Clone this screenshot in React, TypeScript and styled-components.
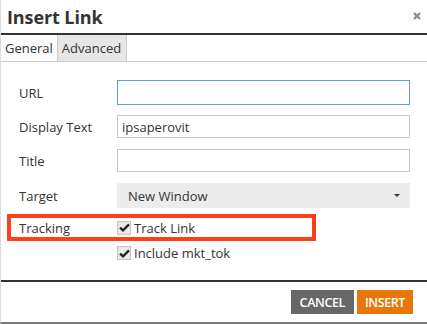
import React from 'react';
import styled, { createGlobalStyle } from 'styled-components';

const GlobalStyle = createGlobalStyle`
  html, body {
    margin: 0;
    padding: 0;
    background: #ffffff;
  }
  body {
    font-family: "Open Sans", "Liberation Sans", sans-serif;
    color: #333333;
  }
`;

// Dialog frame
const Dialog = styled.div`
  width: 427px;
  height: 324px;
  box-sizing: border-box;
  border-left: 1px solid #dcdcdc;
  border-bottom: 2px solid #7a7a7a;
  background: #ffffff;
  display: flex;
  flex-direction: column;
  overflow: hidden;
`;

const Header = styled.div`
  height: 33px;
  display: flex;
  align-items: center;
  justify-content: space-between;
  padding: 0 6px 0 6px;
  border-bottom: 2px solid #333333;
`;

const Title = styled.h1`
  margin: 0;
  font-size: 18px;
  font-weight: 700;
  color: #333333;
  letter-spacing: -0.1px;
`;

const CloseButton = styled.span`
  display: flex;
  width: 8px;
  height: 8px;
  margin-bottom: 1px;
`;

// Tabs
const TabBar = styled.div`
  display: flex;
  height: 26px;
  border-bottom: 1px solid #cccccc;
`;

const Tab = styled.div<{ $active?: boolean }>`
  display: flex;
  align-items: center;
  padding: 0 ${p => (p.$active ? '4px' : '5px')} 0 ${p => (p.$active ? '4px' : '4px')};
  font-size: 13px;
  color: #333333;
  background: ${p => (p.$active ? '#fbfbfb' : '#e6e6e6')};
  border-right: 1px solid #cccccc;
  border-left: ${p => (p.$active ? 'none' : '1px solid #cccccc')};
  margin-left: ${p => (p.$active ? '0' : '-1px')};
`;

// Form body
const Body = styled.div`
  flex: 1;
  display: flex;
  flex-direction: column;
  padding: 18px 0 0 0;
`;

const Row = styled.div<{ $gap?: number; $height: number }>`
  display: flex;
  align-items: center;
  height: ${p => p.$height}px;
  margin-top: ${p => p.$gap ?? 0}px;
  padding-left: 18px;
`;

const Label = styled.label`
  width: 98px;
  font-size: 13px;
  color: #333333;
  flex-shrink: 0;
`;

const Input = styled.input<{ $focused?: boolean }>`
  width: 293px;
  height: 100%;
  box-sizing: border-box;
  border: 1px solid ${p => (p.$focused ? '#5b9ddc' : '#c8c8c8')};
  padding: 0 4px;
  font-family: "Open Sans", "Liberation Sans", sans-serif;
  font-size: 13px;
  color: #333333;
  outline: none;
  background: #ffffff;
`;

const Select = styled.div`
  width: 293px;
  height: 100%;
  box-sizing: border-box;
  background: #ececec;
  display: flex;
  align-items: center;
  justify-content: space-between;
  padding: 0 10px 0 11px;
  font-size: 13px;
  color: #333333;
`;

const Caret = styled.span`
  width: 0;
  height: 0;
  border-left: 3px solid transparent;
  border-right: 3px solid transparent;
  border-top: 3px solid #333333;
`;

const TrackingBox = styled.div`
  display: flex;
  align-items: center;
  width: 309px;
  height: 27px;
  box-sizing: border-box;
  margin: 6px 0 0 6px;
  padding-left: 8px;
  border: 4px solid #ff3f17;
`;

const CheckLine = styled.span`
  display: flex;
  align-items: center;
  gap: 3px;
  font-size: 13px;
  color: #333333;
`;

const CheckBox = styled.span`
  width: 14px;
  height: 14px;
  box-sizing: border-box;
  background: #e9e9e9;
  border: 1px solid #c4c4c4;
  display: flex;
  align-items: center;
  justify-content: center;
`;

// Footer
const Footer = styled.div`
  display: flex;
  justify-content: flex-end;
  gap: 3px;
  padding: 8px 14px 8px 0;
  border-top: 2px solid #333333;
`;

const Button = styled.button<{ $primary?: boolean }>`
  height: 24px;
  border: none;
  padding: 0 ${p => (p.$primary ? '8px' : '9px')};
  font-family: "Open Sans", "Liberation Sans", sans-serif;
  font-size: 12.5px;
  font-weight: 600;
  letter-spacing: -0.4px;
  color: #ffffff;
  background: ${p => (p.$primary ? '#e8770a' : '#676767')};
`;

const Check = () => (
  <svg width="11" height="9" viewBox="0 0 11 9">
    <path d="M1 4.6 L4 7.4 L10 1.4" stroke="#222" strokeWidth="2.2" fill="none" />
  </svg>
);

const CheckItem = ({ text }: { text: string }) => (
  <CheckLine>
    <CheckBox>
      <Check />
    </CheckBox>
    {text}
  </CheckLine>
);

const App = () => {
  return (
    <>
      <GlobalStyle />
      <Dialog>
        <Header>
          <Title>Insert Link</Title>
          <CloseButton>
            <svg width="8" height="8" viewBox="0 0 8 8">
              <path d="M1 1 L7 7 M7 1 L1 7" stroke="#8a8a8a" strokeWidth="2.2" />
            </svg>
          </CloseButton>
        </Header>
        <TabBar>
          <Tab $active>General</Tab>
          <Tab>Advanced</Tab>
        </TabBar>
        <Body>
          <Row $height={25}>
            <Label>URL</Label>
            <Input $focused defaultValue="" />
          </Row>
          <Row $height={23} $gap={10}>
            <Label>Display Text</Label>
            <Input defaultValue="ipsaperovit" />
          </Row>
          <Row $height={23} $gap={11}>
            <Label>Title</Label>
            <Input defaultValue="" />
          </Row>
          <Row $height={25} $gap={11}>
            <Label>Target</Label>
            <Select>
              New Window
              <Caret />
            </Select>
          </Row>
          <TrackingBox>
            <Label>Tracking</Label>
            <CheckItem text="Track Link" />
          </TrackingBox>
          <Row $height={16} $gap={4}>
            <Label />
            <CheckItem text="Include mkt_tok" />
          </Row>
        </Body>
        <Footer>
          <Button>CANCEL</Button>
          <Button $primary>INSERT</Button>
        </Footer>
      </Dialog>
    </>
  );
};

export default App;
